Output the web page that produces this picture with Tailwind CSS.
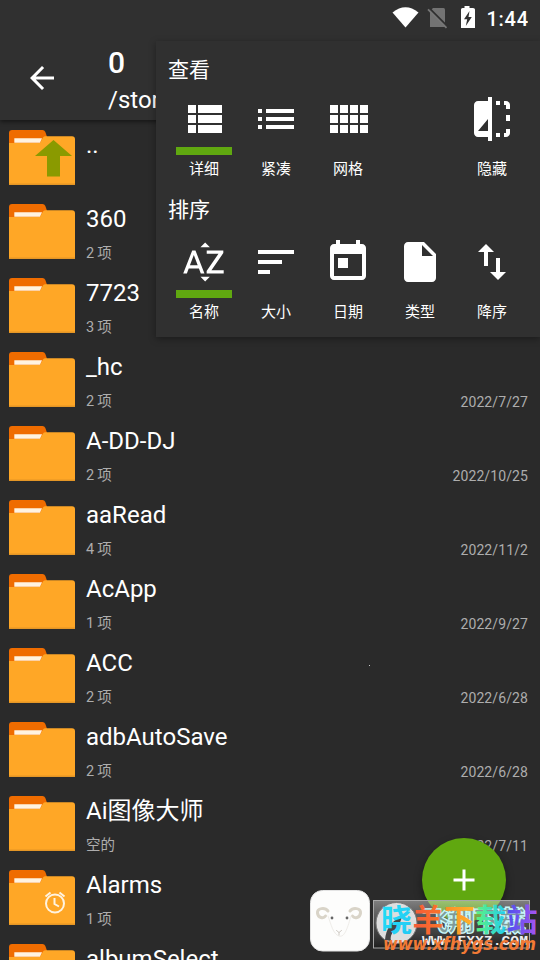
<!DOCTYPE html>
<html lang="zh-CN">
<head>
<meta charset="utf-8">
<title>文件管理</title>
<script src="https://cdn.jsdelivr.net/npm/@tailwindcss/browser@4"></script>
</head>
<body class="bg-[#2a2a2a]">
<svg class="hidden">
  <symbol id="folder" viewBox="0 0 66 55">
    <path fill="#ef6c00" d="M3 0H33.500Q35.500 0 36.200 1.800L40 12V24H0V3Q0 0 3 0z"/>
    <path fill="#ffa726" d="M0 13H31L34 7.500Q34.800 6.300 36.500 6.300H63Q66 6.300 66 9.300V55H0z"/>
    <path fill="#fff3e0" d="M5.300 8.300H33L31 12.800H5.300z"/>
    <path fill="#c98526" d="M0 53.700H66V54.500H0z"/>
  </symbol>
</svg>
<div class="relative w-[540px] h-[960px] overflow-hidden flex flex-col text-white font-['Roboto','Noto_Sans_CJK_SC',sans-serif]">
  <header class="relative h-[120px] shrink-0 bg-[#303030] shadow-[0_2px_4px_rgba(0,0,0,0.45)] flex flex-col">
    <div class="h-9 shrink-0 flex justify-end pr-3 items-center">
      <svg class="w-[136px] h-9" viewBox="0 0 136 36">
        <path fill="#fff" d="M.500 12.500Q13.500 2 26.500 12.500L13.500 27.500z"/>
        <path fill="#737373" d="M41 8H51.500Q53 8 53 9.500V27H38V11z"/>
        <path stroke="#303030" stroke-width="2" d="M37 8L56 27"/>
        <path stroke="#777" stroke-width="1.800" d="M36 9.300L54.500 27.800"/>
        <path fill="#fff" d="M72.500 6h5v2H81Q83 8 83 9.500V28H69V9.500Q69 8 70.500 8h2z"/>
        <path fill="#303030" d="M77.500 11L72 19.200h3.200L73.800 26l6-9H76.500z"/>
        <text x="94.500" y="25.800" fill="#fff" font-size="20" font-weight="500" textLength="41.500" class="font-['Roboto']">1:44</text>
      </svg>
    </div>
    <div class="flex pl-[24px]">
      <svg class="w-9 h-9 mt-[24px]" viewBox="0 0 24 24" fill="#fff"><path d="M20 11H7.830l5.590-5.590L12 4l-8 8 8 8 1.410-1.410L7.830 13H20v-2z"/></svg>
      <div class="pl-12 pt-[9px]">
        <div class="text-[30px] leading-9 font-medium">0</div>
        <div class="text-[24px] leading-9 pt-px">/storage/emulated/0</div>
      </div>
    </div>
  </header>
  <main id="list" class="flex flex-col"></main>
  <div class="absolute left-[369px] top-[665px] w-px h-px bg-[#ccc]"></div>

  <section class="absolute left-[156px] top-[41px] w-[384px] h-[296px] bg-[#303030] shadow-[0_2px_7px_rgba(0,0,0,0.35)] pl-3 pt-[13px] flex flex-col">
    <h2 class="text-[21px] leading-[32px] h-[41px]">查看</h2>
    <div class="flex h-[99px] text-[15px] leading-5 text-center">
      <div class="w-[72px] flex flex-col items-center">
        <svg class="size-12" viewBox="0 0 24 24" fill="#fff"><path d="M4 14h4v-4H4v4zm0 5h4v-4H4v4zM4 9h4V5H4v4zm5 5h12v-4H9v4zm0 5h12v-4H9v4zM9 5v4h12V5H9z"/></svg>
        <div class="mt-1 w-14 h-2 bg-[#60a810]"></div><span class="mt-1">详细</span>
      </div>
      <div class="w-[72px] flex flex-col items-center">
        <svg class="size-12" viewBox="0 0 24 24" fill="#fff"><path d="M3 13h2v-2H3v2zm0 4h2v-2H3v2zm0-8h2V7H3v2zm4 4h14v-2H7v2zm0 4h14v-2H7v2zM7 7v2h14V7H7z"/></svg>
        <span class="mt-4">紧凑</span>
      </div>
      <div class="w-[72px] flex flex-col items-center">
        <svg class="size-12" viewBox="0 0 24 24" fill="#fff"><path d="M3 5h4v4H3zM8 5h4v4H8zM13 5h4v4h-4zM18 5h4v4h-4zM3 10h4v4H3zM8 10h4v4H8zM13 10h4v4h-4zM18 10h4v4h-4zM3 15h4v4H3zM8 15h4v4H8zM13 15h4v4h-4zM18 15h4v4h-4z"/></svg>
        <span class="mt-4">网格</span>
      </div>
      <div class="w-[72px] ml-[72px] flex flex-col items-center">
        <svg class="size-12" viewBox="0 0 24 24" fill="#fff"><path d="M10 3H5c-1.100 0-2 .9-2 2v14c0 1.100.9 2 2 2h5v2h2V1h-2v2zm0 15H5l5-6v6zM14 3h2v2h-2zM14 19h2v2h-2zM18 3h1c1.100 0 2 .9 2 2v2h-2V5h-1zM19 10h2v3h-2zM19 17h2v2c0 1.100-.9 2-2 2h-1v-2h1z"/></svg>
        <span class="mt-4">隐藏</span>
      </div>
    </div>
    <h2 class="text-[21px] leading-[32px] h-[44px]">排序</h2>
    <div class="flex text-[15px] leading-5 text-center">
      <div class="w-[72px] flex flex-col items-center">
        <svg class="size-12" viewBox="0 0 24 24" fill="#fff"><path d="M14.940 4.660h-4.720l2.360-2.360zm-4.690 14.710h4.660l-2.330 2.330zM6.100 6.270L1.600 17.730h1.840l.92-2.450h5.110l.92 2.450h1.840L7.740 6.270H6.100zm-1.130 7.370l1.940-5.180 1.940 5.180H4.970zm10.760 2.500h6.120v1.590h-8.530v-1.290l5.920-8.560h-5.880v-1.600h8.300v1.260l-5.930 8.600z"/></svg>
        <div class="mt-1 w-14 h-2 bg-[#60a810]"></div><span class="mt-1">名称</span>
      </div>
      <div class="w-[72px] flex flex-col items-center">
        <svg class="size-12" viewBox="0 0 24 24" fill="#fff"><path d="M3 18h6v-2H3v2zM3 6v2h18V6H3zm0 7h12v-2H3v2z"/></svg>
        <span class="mt-4">大小</span>
      </div>
      <div class="w-[72px] flex flex-col items-center">
        <svg class="size-12" viewBox="0 0 24 24" fill="#fff"><path d="M19 3h-1V1h-2v2H8V1H6v2H5c-1.110 0-1.990.9-1.990 2L3 19c0 1.100.89 2 2 2h14c1.100 0 2-.9 2-2V5c0-1.100-.9-2-2-2zm0 16H5V8h14v11zM7 10h5v5H7z"/></svg>
        <span class="mt-4">日期</span>
      </div>
      <div class="w-[72px] flex flex-col items-center">
        <svg class="size-12" viewBox="0 0 24 24" fill="#fff"><path d="M6 2c-1.100 0-1.990.9-1.990 2L4 20c0 1.100.89 2 1.990 2H18c1.100 0 2-.9 2-2V8l-6-6H6zm7 7V3.500L18.500 9H13z"/></svg>
        <span class="mt-4">类型</span>
      </div>
      <div class="w-[72px] flex flex-col items-center">
        <svg class="size-12" viewBox="0 0 24 24" fill="#fff"><path d="M16 17.010V10h-2v7.010h-3L15 21l4-3.990h-3zM9 3L5 6.990h3V14h2V6.990h3L9 3z"/></svg>
        <span class="mt-4">降序</span>
      </div>
    </div>
  </section>

  <button class="absolute left-[422px] top-[838px] size-[84px] rounded-full bg-[#60a810] shadow-[0_4px_8px_rgba(0,0,0,0.4)] flex items-center justify-center">
    <svg class="size-6" viewBox="0 0 24 24"><path stroke="#fff" stroke-width="3" d="M12 1.500V22.500M1.500 12H22.500"/></svg>
  </button>

  <svg class="absolute left-[300px] top-[880px] w-[240px] h-[80px]" viewBox="300 880 240 80">
    <defs>
      <linearGradient id="badge" x1="0" y1="0" x2="0" y2="1"><stop offset="0" stop-color="#ddd" stop-opacity=".48"/><stop offset=".5" stop-color="#888" stop-opacity=".35"/><stop offset="1" stop-color="#111" stop-opacity=".5"/></linearGradient>
      <linearGradient id="c1" x1="0" y1="0" x2="1" y2="1"><stop offset="0" stop-color="#20dff5"/><stop offset="1" stop-color="#25c8f5"/></linearGradient>
      <linearGradient id="c2"><stop offset="0" stop-color="#f55a3a"/><stop offset="1" stop-color="#fa7526"/></linearGradient>
      <linearGradient id="c3"><stop offset="0" stop-color="#fa8b28"/><stop offset="1" stop-color="#ffb52a"/></linearGradient>
      <linearGradient id="c4"><stop offset="0" stop-color="#5df57a"/><stop offset="1" stop-color="#22cdf2"/></linearGradient>
      <linearGradient id="c5"><stop offset="0" stop-color="#4a50ee"/><stop offset="1" stop-color="#a855f0"/></linearGradient>
    </defs>
    <rect x="310.500" y="890.500" width="59" height="60.500" rx="12" fill="#fdfdfc" stroke="#e4e4e4"/>
    <g fill="none" stroke-linecap="round">
      <path stroke="#d9d4c8" stroke-width="3" d="M328 911c-3-4-11-3-10.500 2 .5 5 6 6 8 3M350 911c3-4 11-3 10.500 2-.5 5-6 6-8 3"/>
      <path stroke="#efede9" stroke-width="1" d="M328 916c3 8 5 18 11 20s9-10 12-20"/>
      <path stroke="#cfcac4" stroke-width="1" d="M336.500 930.500l2.500 2 2.500-2M339 932.500v2.500"/>
    </g>
    <circle cx="332" cy="918" r="1.400" fill="#666"/><circle cx="347" cy="918" r="1.400" fill="#666"/>
    <rect x="373.500" y="900.500" width="156" height="47.500" fill="url(#badge)" stroke="#a8a8a8"/>
    <circle cx="396.500" cy="923" r="20.500" fill="#dedede" stroke="#777"/>
    <path fill="#444" d="M385 940c1-11 6-19 18-25-3 6-3 11-9 16-3 3-4 6-3 10z"/>
    <text x="422" y="930.500" font-size="27" font-weight="900" textLength="104" fill="#7f9a98" stroke="#c8f7fa" stroke-width="1.300" class="font-['Noto_Sans_CJK_SC',sans-serif]">飞翔下载</text>
    <text x="422" y="944.500" font-size="12" font-weight="700" textLength="106" lengthAdjust="spacingAndGlyphs" fill="#eee" class="font-['Liberation_Mono',monospace]">WWW.FXXZ.COM</text>
    <g font-size="31" font-weight="700" class="font-['Noto_Sans_CJK_SC',sans-serif]">
      <text x="381" y="931" fill="url(#c1)">晓</text><text x="412.500" y="931" fill="url(#c2)">羊</text><text x="444" y="931" fill="url(#c3)">下</text><text x="475" y="931" fill="url(#c4)">载</text><text x="506.500" y="931" fill="url(#c5)">站</text>
    </g>
    <text x="383" y="950" font-size="17" font-weight="700" font-style="italic" textLength="153" lengthAdjust="spacingAndGlyphs" fill="#f27a35" class="font-['DejaVu_Sans',sans-serif]">www.xfhygs.com</text>
  </svg>
</div>
<script>
const rows = [
  ['..', '', '', 'up'], ['360', '2 项', ''], ['7723', '3 项', ''], ['_hc', '2 项', '2022/7/27'],
  ['A-DD-DJ', '2 项', '2022/10/25'], ['aaRead', '4 项', '2022/11/2'], ['AcApp', '1 项', '2022/9/27'],
  ['ACC', '2 项', '2022/6/28'], ['adbAutoSave', '2 项', '2022/6/28'], ['Ai图像大师', '空的', '2022/7/11'],
  ['Alarms', '1 项', '', 'alarm'], ['albumSelect', '', '']
];
const overlays = {
  up: '<path fill="#8a9a00" d="M44.500 10L63 26H51V46.500H38V26H26z"/>',
  alarm: '<g fill="none" stroke="#fff3e0" stroke-width="2"><circle cx="46" cy="33.500" r="9"/><path d="M45.500 28V34L50 36.500M36.500 26.500L41.500 22.500M50.500 22.500L55.500 26.500"/></g>'
};
document.getElementById('list').innerHTML = rows.map(([name, sub, date, mark]) => `
  <div class="h-[74px] shrink-0 flex pl-[9px] pr-3 pt-[10px]">
    <svg class="w-[66px] h-[55px] shrink-0" viewBox="0 0 66 55"><use href="#folder" width="66" height="55"/>${overlays[mark] || ''}</svg>
    <div class="ml-[11px] flex-1 whitespace-nowrap">
      <div class="text-[24px] leading-[30px] h-[30px]">${name}</div>
      <div class="mt-[10px] h-5 flex justify-between text-[14.5px] leading-5 text-[#adadad]"><span class="[word-spacing:-0.5px]">${sub}</span><span class="text-[14px] tracking-[0.1px]">${date}</span></div>
    </div>
  </div>`).join('');
</script>
</body>
</html>
